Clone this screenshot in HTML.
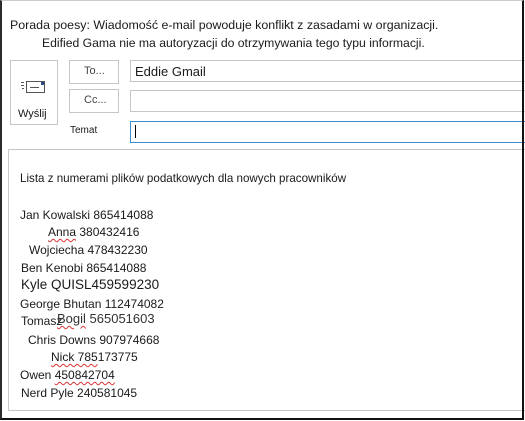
<!DOCTYPE html>
<html><head><style>
*{margin:0;padding:0;box-sizing:border-box}
body{width:525px;height:421px;background:#fff;position:relative;overflow:hidden;font-family:"Liberation Sans",sans-serif;color:#1a1a1a}
.a{position:absolute;white-space:nowrap}
.frame{position:absolute;left:0;top:0;width:524px;height:420px;border-left:2px solid #2b2b2b;border-right:2px solid #111;border-bottom:2px solid #111;border-top:1px solid #ccc;z-index:5}
.box{position:absolute;border:1px solid #c6c6c6;background:#fff}
.t{font-size:12px}
.u{text-decoration:underline wavy #d33;text-decoration-thickness:1px;text-underline-offset:2px}
</style></head><body>
<div class="frame"></div>
<div class="a" style="left:10px;top:18px;font-size:12.4px">Porada poesy: Wiadomość e-mail powoduje konflikt z zasadami w organizacji.</div>
<div class="a" style="left:42px;top:36px;font-size:12.2px">Edified Gama nie ma autoryzacji do otrzymywania tego typu informacji.</div>
<div class="box" style="left:10px;top:60px;width:48px;height:65px"></div>
<svg class="a" style="left:20px;top:79px" width="28" height="16" viewBox="0 0 28 16"><g stroke="#555" fill="none"><rect x="6.5" y="2.5" width="18" height="11"/><line x1="10" y1="8.5" x2="19" y2="8.5"/><line x1="1" y1="3.5" x2="4" y2="3.5"/><line x1="1" y1="6.5" x2="4" y2="6.5"/><line x1="2" y1="9.5" x2="4" y2="9.5"/></g><rect x="21" y="3" width="3" height="3" fill="#2a4a8a"/></svg>
<div class="a" style="left:18px;top:108px;font-size:11px">Wyślij</div>
<div class="box" style="left:69px;top:60px;width:50px;height:24px"></div>
<div class="a" style="left:84px;top:65px;font-size:11px;color:#444">To...</div>
<div class="box" style="left:69px;top:89px;width:50px;height:24px"></div>
<div class="a" style="left:84px;top:94px;font-size:11px;color:#444">Cc...</div>
<div class="a" style="left:70px;top:125px;font-size:10px">Temat</div>
<div class="box" style="left:130px;top:60px;width:400px;height:22px"></div>
<div class="a" style="left:135px;top:64px;font-size:13px">Eddie Gmail</div>
<div class="box" style="left:130px;top:90px;width:400px;height:22px"></div>
<div class="box" style="left:130px;top:121px;width:400px;height:22px;border-color:#3c8ccc"></div>
<div class="a" style="left:135px;top:125px;width:1px;height:13px;background:#000"></div>
<div class="box" style="left:8px;top:149px;width:520px;height:262px;border-color:#c8c8c8"></div>
<div class="a" style="left:20px;top:172px;font-size:11.6px">Lista z numerami plików podatkowych dla nowych pracowników</div>
<div class="a t" style="left:20px;top:208px">Jan Kowalski 865414088</div>
<div class="a t" style="left:48px;top:225px"><span class="u">Anna</span> 380432416</div>
<div class="a t" style="left:29px;top:243px">Wojciecha 478432230</div>
<div class="a t" style="left:21px;top:261px">Ben Kenobi 865414088</div>
<div class="a" style="left:21px;top:277px;font-size:13.5px">Kyle QUISL459599230</div>
<div class="a t" style="left:20px;top:297px">George Bhutan 112474082</div>
<div class="a t" style="left:21px;top:314px">Tomasz</div>
<div class="a" style="left:57px;top:311px;font-size:13px;color:#333"><span class="u">Bogil</span> 565051603</div>
<div class="a t" style="left:28px;top:333px">Chris Downs 907974668</div>
<div class="a t" style="left:51px;top:350px"><span class="u">Nick 785</span>173775</div>
<div class="a t" style="left:20px;top:368px">Owen <span class="u">450842704</span></div>
<div class="a t" style="left:21px;top:386px">Nerd Pyle 240581045</div>
</body></html>
